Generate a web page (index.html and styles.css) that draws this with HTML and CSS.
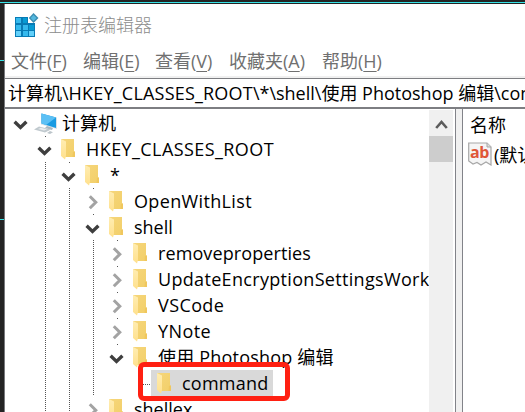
FILE: index.html
```
<!DOCTYPE html>
<html lang="zh-CN">
<head>
<meta charset="utf-8">
<title>注册表编辑器</title>
<link rel="stylesheet" href="styles.css">
</head>
<body>
<svg width="0" height="0" class="defs">
  <defs>
    <linearGradient id="fg" x1="0" y1="0" x2="1" y2="1"><stop offset="0" stop-color="#f6d67b"/><stop offset="1" stop-color="#f2cf69"/></linearGradient>
    <linearGradient id="ff" x1="0" y1="0" x2="0" y2="1"><stop offset="0" stop-color="#ffedb2"/><stop offset="1" stop-color="#ffe08c"/></linearGradient>
    <symbol id="folder" viewBox="0 0 24 26"><path d="M4 3H17V15L18 16V21H7L4 18Z" fill="url(#fg)"/><path d="M16 16L18 15.5V21H15.5Z" fill="#f0c75e"/><path d="M4 3L9 5.5V20L8 23.5L4 20Z" fill="url(#ff)"/></symbol>
    <symbol id="open" viewBox="0 0 24 26"><path d="M5.6 11.8L11.5 17.4L17.4 11.8" fill="none" stroke="#3e3e3e" stroke-width="3.4"/></symbol>
    <symbol id="closed" viewBox="0 0 24 26"><path d="M8.8 8.2L14.8 14.2L8.8 20.2" fill="none" stroke="#a3a3a3" stroke-width="3"/></symbol>
  </defs>
</svg>
<div class="screen">
  <div class="window">
    <header class="title">
      <svg width="24" height="25" viewBox="0 0 24 25">
        <path d="M0 4H13V10H20V24H0Z" fill="#087bb5"/>
        <path d="M1 5H6V10H1ZM1 12H6V17H1ZM8 12H13V17H8ZM8 18H13V23H8Z" fill="#35b9ed"/>
        <path d="M1 18H6V23H1ZM14 18H19V23H14Z" fill="#62d0fa"/>
        <path d="M8 5H12V10H8ZM14 12H19V17H14Z" fill="#079bd4"/>
        <path d="M18.5 0L23.5 5L18.5 10L13.8 5Z" fill="#3c8eb2"/><path d="M18.5 2L21.5 5L18.5 8L15.7 5Z" fill="#54b9e0"/>
      </svg>
      <span>注册表编辑器</span>
    </header>
    <nav class="menu">
      <span class="m1">文件(<u>F</u>)</span><span class="m2">编辑(<u>E</u>)</span><span class="m3">查看(<u>V</u>)</span><span class="m4">收藏夹(<u>A</u>)</span><span class="m5">帮助(<u>H</u>)</span>
    </nav>
    <div class="address"><span>计算机\<b>HKEY_CLASSES_ROOT</b>\*\shell\使用 Photoshop 编辑\command</span></div>
    <main class="panes">
      <div class="tree">
        <div class="rows">
          <div class="row"><svg class="cell"><use href="#open"/></svg><svg class="cell" viewBox="0 0 24 26"><path d="M8 3.5L24 7.5V19L8 14.5Z" fill="#d8e2e8"/><path d="M8.5 3.5L23 7.5V18L8.5 13.5Z" fill="#199be2"/><path d="M8.5 3.5L23 7.5L13 15L8.5 13.5Z" fill="#5bc0f5"/><path d="M14 16L20 18L19 20L12 18Z" fill="#a9b8c1"/><path d="M1 19.5L6 16.5L18 19.5L12 22.5Z" fill="#c0c9ce"/><path d="M5 19L8 17.7L14 19.5L11 20.5Z" fill="#e9edef"/><path d="M14 23L17 21L20 22.2L17 24Z" fill="#bcc5ca"/></svg><span class="label">计算机</span></div>
          <div class="row"><i class="gap"></i><svg class="cell dot"><use href="#open"/></svg><svg class="cell"><use href="#folder"/></svg><span class="label root">HKEY_CLASSES_ROOT</span></div>
          <div class="row"><i class="gap"></i><i class="guide"></i><svg class="cell dot"><use href="#open"/></svg><svg class="cell"><use href="#folder"/></svg><span class="label">*</span></div>
          <div class="row"><i class="gap"></i><i class="guide"></i><i class="guide"></i><svg class="cell dot"><use href="#closed"/></svg><svg class="cell"><use href="#folder"/></svg><span class="label owl">OpenWithList</span></div>
          <div class="row"><i class="gap"></i><i class="guide"></i><i class="guide"></i><svg class="cell dot"><use href="#open"/></svg><svg class="cell"><use href="#folder"/></svg><span class="label">shell</span></div>
          <div class="row"><i class="gap"></i><i class="guide"></i><i class="guide"></i><i class="guide"></i><svg class="cell dot"><use href="#closed"/></svg><svg class="cell"><use href="#folder"/></svg><span class="label rem">removeproperties</span></div>
          <div class="row"><i class="gap"></i><i class="guide"></i><i class="guide"></i><i class="guide"></i><svg class="cell dot"><use href="#closed"/></svg><svg class="cell"><use href="#folder"/></svg><span class="label upd">UpdateEncryptionSettingsWork</span></div>
          <div class="row"><i class="gap"></i><i class="guide"></i><i class="guide"></i><i class="guide"></i><svg class="cell dot"><use href="#closed"/></svg><svg class="cell"><use href="#folder"/></svg><span class="label code">VSCode</span></div>
          <div class="row"><i class="gap"></i><i class="guide"></i><i class="guide"></i><i class="guide"></i><svg class="cell dot"><use href="#closed"/></svg><svg class="cell"><use href="#folder"/></svg><span class="label code">YNote</span></div>
          <div class="row"><i class="gap"></i><i class="guide"></i><i class="guide"></i><i class="guide"></i><svg class="cell dot"><use href="#open"/></svg><svg class="cell"><use href="#folder"/></svg><span class="label ps">使用 Photoshop 编辑</span></div>
          <div class="row"><i class="gap"></i><i class="guide"></i><i class="guide"></i><i class="guide"></i><i class="gap"></i><i class="branch"></i><span class="selected"><svg class="cell"><use href="#folder"/></svg><span class="label cmd">command</span></span></div>
          <div class="row"><i class="gap"></i><i class="guide"></i><i class="guide"></i><svg class="cell"><use href="#closed"/></svg><svg class="cell"><use href="#folder"/></svg><span class="label">shellex</span></div>
        </div>
        <div class="scroll">
          <svg width="24" height="26" viewBox="0 0 24 26"><path d="M7.2 18L12.5 12L17.8 18" fill="none" stroke="#5c5c5c" stroke-width="2.6"/></svg>
          <div class="thumb"></div>
        </div>
      </div>
      <div class="splitter"></div>
      <div class="values">
        <div class="column">名称</div>
        <div class="value">
          <svg width="24" height="24" viewBox="0 0 24 24"><path d="M.7 1H19L23 5V23L18 20L13 23L9 20.5L5 22L.7 19Z" fill="#f5f5f5" stroke="#a7a7a7" stroke-width="1.2"/><path d="M19 1V5H23" fill="#ddd" stroke="#a7a7a7"/><text x="2" y="16" class="ab">ab</text></svg>
          <span>(默认)</span>
        </div>
      </div>
    </main>
  </div>
  <div class="mark"></div>
</div>
</body>
</html>
```
FILE: styles.css
```
* { box-sizing: border-box; }
body { margin: 0; font-family: "Open Sans", "Noto Sans CJK SC", sans-serif; font-size: 18px; color: #000; }
.defs { position: absolute; }
.screen { position: relative; width: 525px; height: 412px; overflow: hidden; padding: 4px 0 0 4px;
  background: linear-gradient(#35e2e6, #35e2e6) 0 2px / 525px 1px no-repeat, linear-gradient(#35e2e6, #35e2e6) 0 60px / 4px 1px no-repeat, linear-gradient(#35e2e6, #35e2e6) 0 219px / 4px 1px no-repeat, #242424; }
.window { height: 408px; background: #fff; border-left: 1px solid #78797d; display: flex; flex-direction: column; }
.title { height: 42px; display: flex; align-items: center; padding-left: 10px; color: #8c8c8c; font-family: "Noto Sans CJK SC", sans-serif; font-weight: 300; white-space: nowrap; }
.title svg { margin-right: 5px; }
.title span { position: relative; top: -1px; }
.menu { height: 30px; line-height: 31px; display: flex; padding-left: 6px; color: #707070; white-space: nowrap; }
.menu u { text-decoration-thickness: 1px; text-underline-offset: 3px; }
.m1, .m2 { width: 72px; }
.m3 { width: 74px; }
.m4 { width: 93px; }
.address { height: 33px; border-top: 2px solid #f0f0f0; border-bottom: 2px solid #7d7e82; white-space: nowrap; overflow: hidden; line-height: 30px; padding-left: 3px; box-shadow: inset 0 1px #7d7e82; }
.address b { font-weight: 400; letter-spacing: .2px; }
.panes { flex: 1; min-height: 0; display: flex; overflow: hidden; }
.tree { width: 451px; padding-top: 1px; border-right: 1px solid #828389; display: flex; overflow: hidden; }
.rows { width: 424px; flex: none; padding-left: 4px; overflow: hidden; }
.row { height: 26px; display: flex; white-space: nowrap; line-height: 26px; }
.cell { width: 24px; height: 26px; flex: none; display: block; }
.gap, .guide { width: 24px; flex: none; }
.guide { background: repeating-linear-gradient(#555 0 1px, transparent 1px 2px) 12px 0 / 1px 26px no-repeat; }
.dot { background: linear-gradient(#555, #555) 12px 0 / 1px 1px no-repeat; }
.label { padding-left: 5px; }
.root { letter-spacing: .42px; }
.owl { letter-spacing: .35px; }
.rem { letter-spacing: .1px; }
.upd { letter-spacing: .32px; }
.code { letter-spacing: .4px; }
.ps { letter-spacing: .2px; }
.cmd { letter-spacing: .25px; }
.branch { width: 22px; background: repeating-linear-gradient(90deg, #555 0 1px, transparent 1px 2px) 12px 14px / 10px 1px no-repeat; }
.selected { display: flex; width: 122px; margin-left: 0; padding-left: 2px; background: #d9d9d9; }
.scroll { width: 24px; flex: none; background: #f0f0f0; }
.scroll svg { display: block; }
.thumb { height: 26px; background: #cdcdcd; }
.splitter { width: 7px; background: #f0f0f0; border-right: 1px solid #828389; }
.values { flex: 1; min-width: 0; padding: 3px 0 0 5px; white-space: nowrap; overflow: hidden; }
.column { height: 28px; line-height: 26px; padding-left: 2px; }
.value { display: flex; align-items: center; height: 28px; }
.value svg { flex: none; }
.ab { font: bold 16px "Open Sans", sans-serif; fill: #df5738; letter-spacing: -.5px; }
.value span { padding-left: 2px; }
.mark { position: absolute; left: 138px; top: 362px; width: 152px; height: 39px; border: 5px solid #ff2012; border-radius: 6px; }
```
